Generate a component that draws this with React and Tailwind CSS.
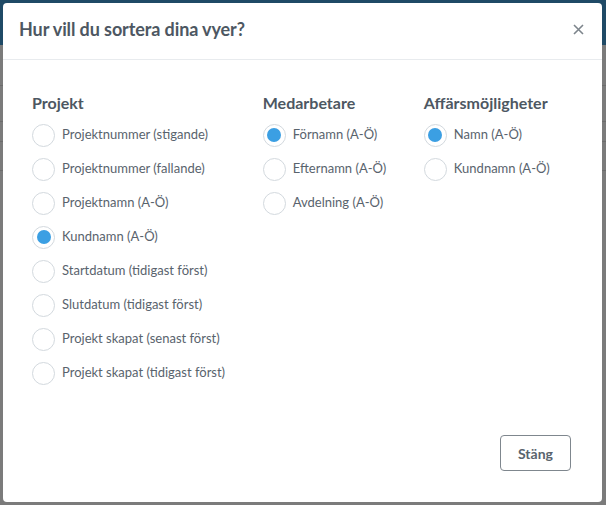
import { useState } from 'react';

const groups = [
  {
    title: 'Projekt',
    width: 'w-[232px]',
    options: [
      'Projektnummer (stigande)',
      'Projektnummer (fallande)',
      'Projektnamn (A-Ö)',
      'Kundnamn (A-Ö)',
      'Startdatum (tidigast först)',
      'Slutdatum (tidigast först)',
      'Projekt skapat (senast först)',
      'Projekt skapat (tidigast först)',
    ],
    selected: 3,
  },
  {
    title: 'Medarbetare',
    width: 'w-[162px]',
    options: ['Förnamn (A-Ö)', 'Efternamn (A-Ö)', 'Avdelning (A-Ö)'],
    selected: 0,
  },
  {
    title: 'Affärsmöjligheter',
    width: 'w-[150px]',
    options: ['Namn (A-Ö)', 'Kundnamn (A-Ö)'],
    selected: 0,
  },
];

function Radio({ checked, label, onClick }) {
  return (
    <button type="button" onClick={onClick} className="flex items-center gap-[7px] h-[34px] text-left">
      <span className="w-[23px] h-[23px] rounded-full border border-[#d3d9de] bg-white flex items-center justify-center shrink-0">
        {checked && <span className="w-[14px] h-[14px] rounded-full bg-[#3b9fe3]" />}
      </span>
      <span className="text-[13px] text-[#59636d] whitespace-nowrap">{label}</span>
    </button>
  );
}

export default function App() {
  const [sel, setSel] = useState(groups.map(g => g.selected));

  return (
    <div className="relative w-[606px] h-[505px] overflow-hidden bg-[#7b7b7b]" style={{ fontFamily: 'Lato, "Open Sans", sans-serif' }}>
      {/* dimmed page behind */}
      <div className="h-[45px] bg-[#1f4a66]" />
      <div className="flex flex-col">
        <div className="h-[41px] border-b border-[#6c6c6c]" />
        <div className="h-[36px] border-b border-[#6c6c6c]" />
        <div className="h-[20px] border-b border-[#6c6c6c]" />
        <div className="h-[29px] border-b border-[#6c6c6c]" />
      </div>

      <div className="absolute left-[3px] top-[3px] w-[599px] h-[499px] bg-white rounded-[4px] flex flex-col">
        <div className="h-[57px] flex items-center justify-between pl-[16px] pr-[18px] pb-[3px] border-b border-[#e8ebee]">
          <h1 className="text-[18px] font-bold text-[#4d5762] tracking-[-0.1px]">Hur vill du sortera dina vyer?</h1>
          <button type="button" className="text-[#7d858c]">
            <svg width="11" height="11" viewBox="0 0 11 11" stroke="currentColor" strokeWidth="1.6">
              <path d="M1 1L10 10M10 1L1 10" />
            </svg>
          </button>
        </div>

        <div className="flex px-[29px] pt-[31px]">
          {groups.map((g, gi) => (
            <div key={g.title} className={g.width}>
              <h2 className="text-[16px] font-bold text-[#4d5762] mb-[3px]">{g.title}</h2>
              <div className="flex flex-col">
                {g.options.map((o, oi) => (
                  <Radio
                    key={o}
                    label={o}
                    checked={sel[gi] === oi}
                    onClick={() => setSel(s => s.map((v, i) => (i === gi ? oi : v)))}
                  />
                ))}
              </div>
            </div>
          ))}
        </div>

        <div className="mt-auto flex justify-end px-[31px] pb-[31px]">
          <button type="button" className="w-[71px] h-[36px] rounded-[4px] border border-[#7f878e] text-[14px] font-bold text-[#59636d]">
            Stäng
          </button>
        </div>
      </div>
    </div>
  );
}
